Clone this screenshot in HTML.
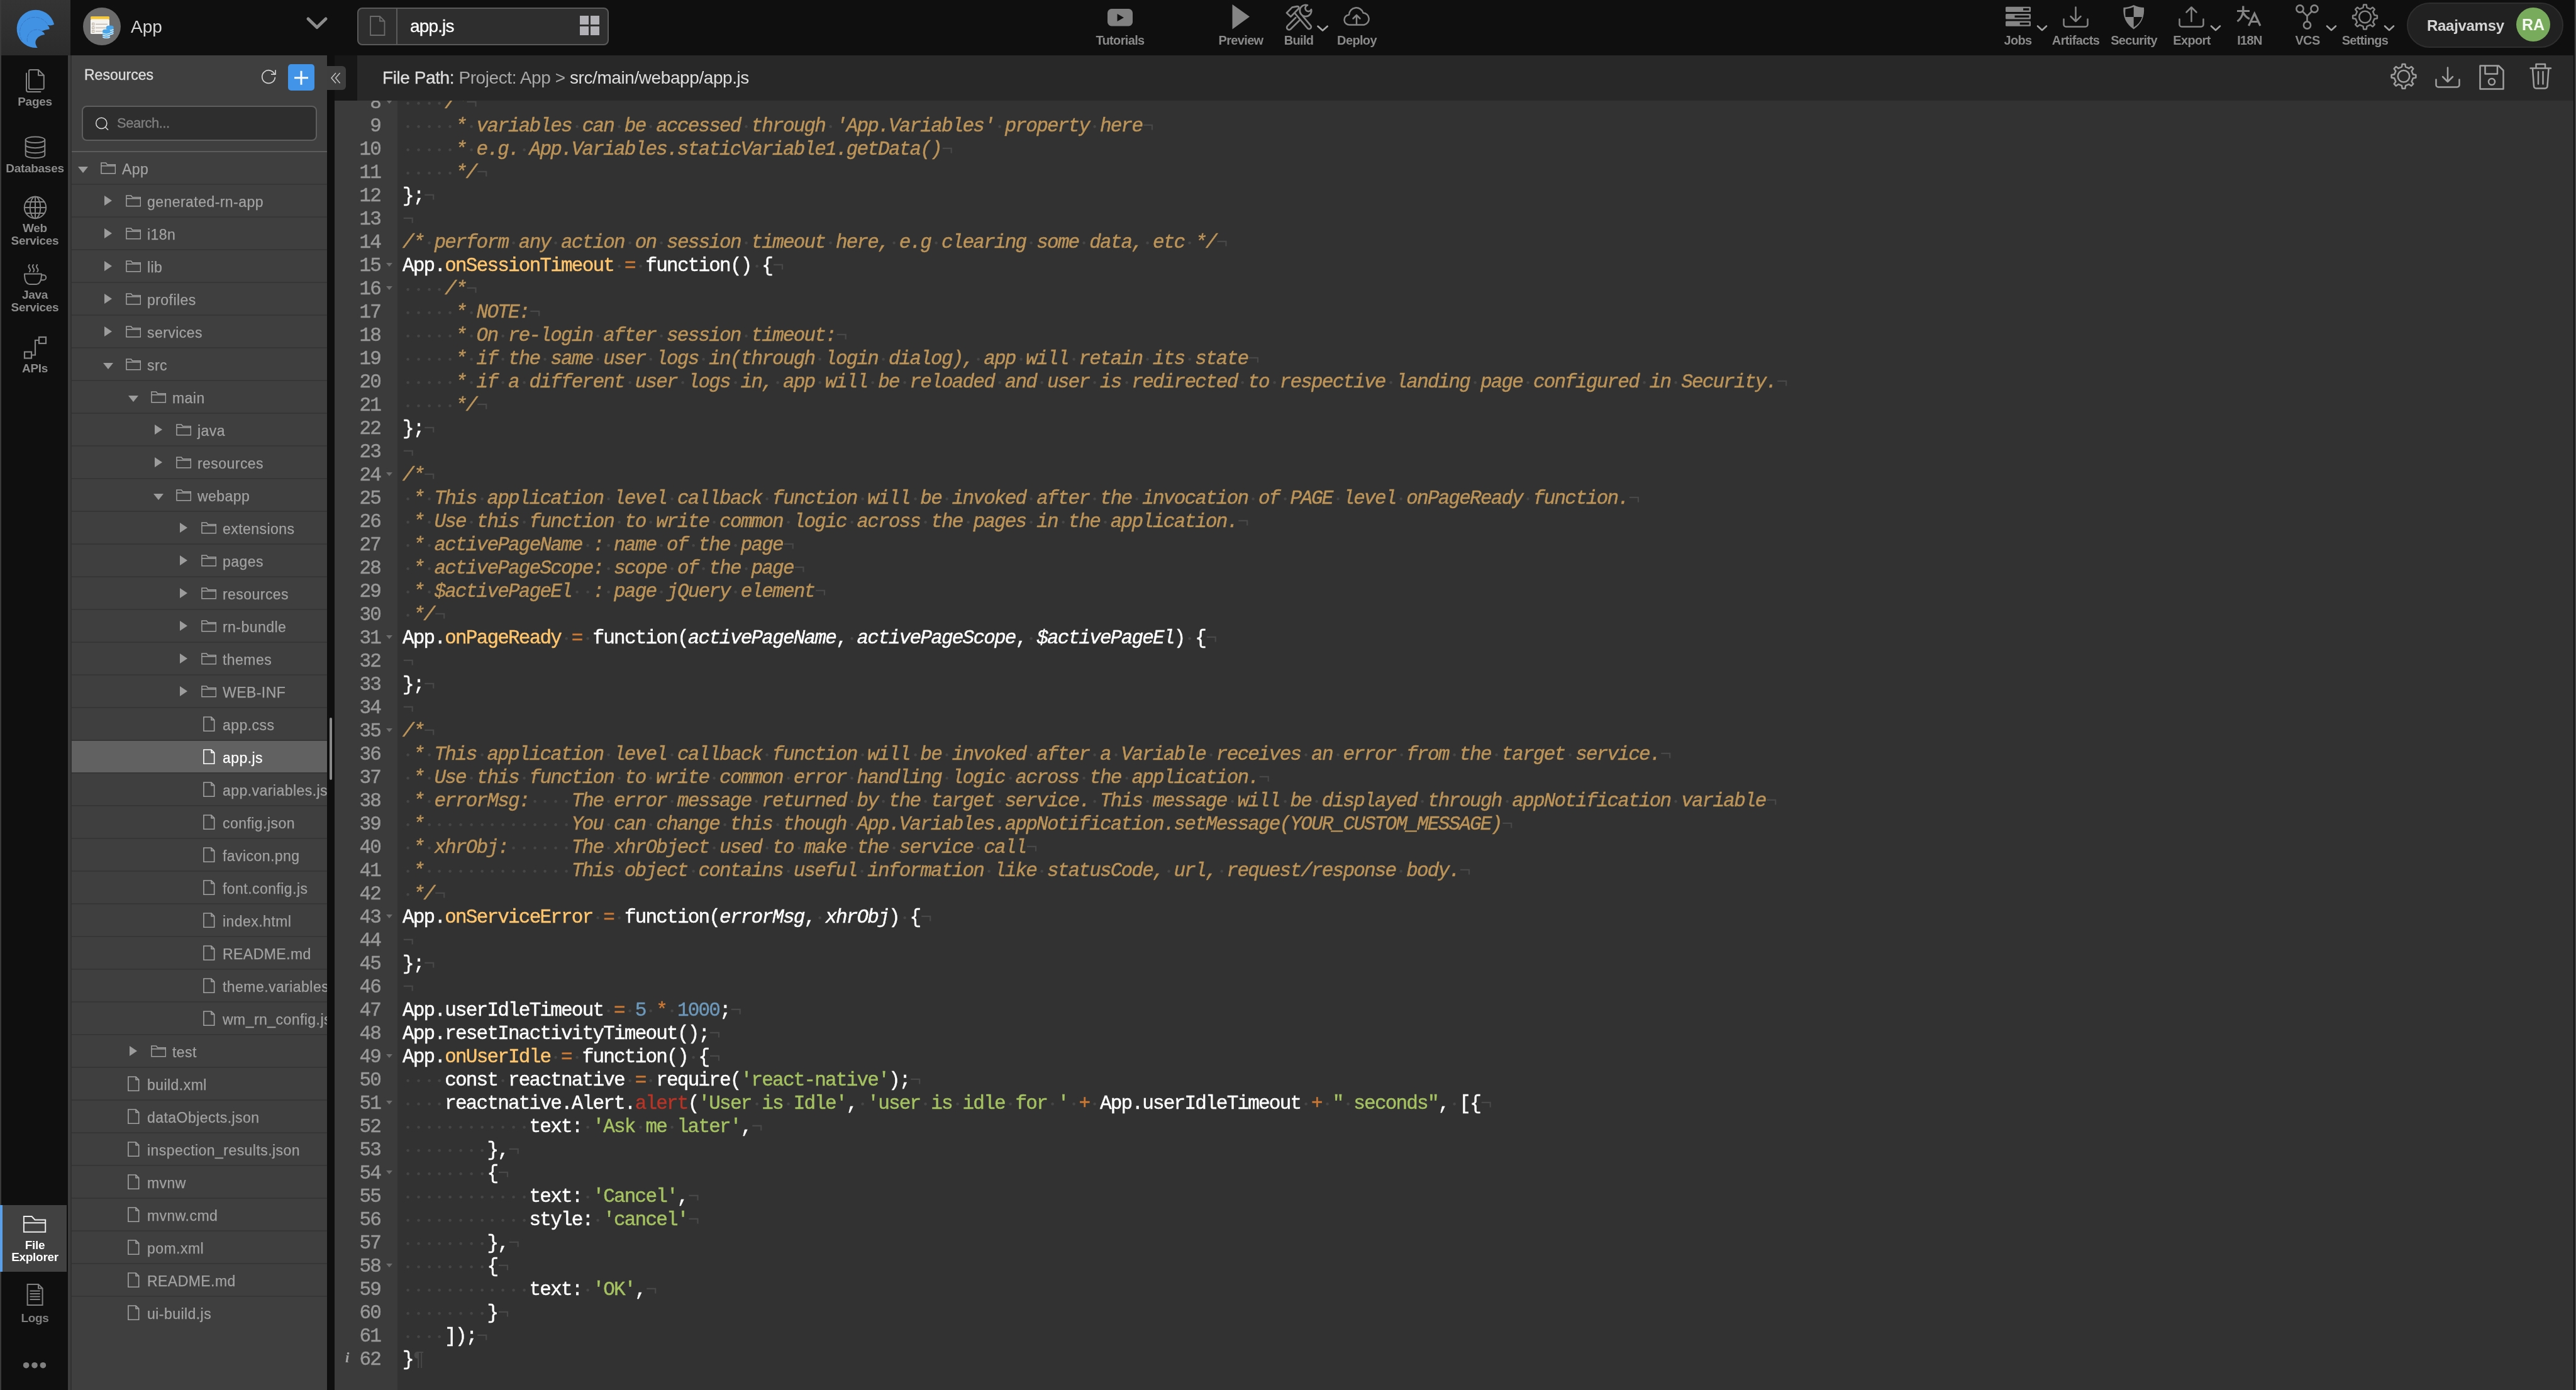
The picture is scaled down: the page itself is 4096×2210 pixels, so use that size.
<!DOCTYPE html>
<html><head><meta charset="utf-8"><title>app.js</title>
<style>
*{box-sizing:border-box;margin:0;padding:0}
html,body{width:4096px;height:2210px;overflow:hidden;background:#0f0f0f}
body{font-family:"Liberation Sans",sans-serif;position:relative;color:#a0a0a0}
.abs{position:absolute}
b,i{font-weight:normal;font-style:normal}
/* window edges */
#edgeL{left:0;top:0;width:2px;height:2210px;background:#3a3a3a}
#edgeR{left:4094px;top:0;width:2px;height:2210px;background:#484848}
/* top bar */
#top{left:0;top:0;width:4096px;height:88px;background:#0f0f0f}
#logo{left:2px;top:0;width:110px;height:88px;background:linear-gradient(#343434,#2b2b2b)}
#projc{left:132px;top:12px;width:60px;height:60px;border-radius:50%;background:#6b6b6b}
#projn{left:208px;top:25px;font-size:28px;line-height:36px;color:#d6d6d6}
#tab{left:568px;top:12px;width:400px;height:60px;border:2px solid #5a5a5a;border-radius:8px;background:#2e2e2e}
#tabdiv{left:630px;top:13px;width:2px;height:58px;background:#5a5a5a}
#tabn{left:652px;top:25px;font-size:28px;line-height:34px;color:#fff;letter-spacing:-0.85px;-webkit-text-stroke:0.3px}
.tl{position:absolute;top:52px;font-size:20px;line-height:24px;font-weight:bold;color:#8a8a8a;text-align:center;white-space:nowrap;transform:translateX(-50%);letter-spacing:-0.65px}
.ti{position:absolute;color:#858585}
.chev{position:absolute;color:#9a9a9a}
#pill{left:3827px;top:4px;width:249px;height:72px;border-radius:36px;background:#212121;border:2px solid #2e2e2e}
#uname{left:3859px;top:26px;font-size:24px;line-height:30px;font-weight:bold;color:#d4d4d4;letter-spacing:-0.3px}
#avatar{left:4001px;top:12px;width:54px;height:54px;border-radius:50%;background:#79ab5c;color:#f4f8f0;font-weight:bold;font-size:25px;line-height:54px;text-align:center}
/* left nav */
#nav{left:2px;top:88px;width:106px;height:2122px;background:#0f0f0f}
#navstrip{left:108px;top:88px;width:6px;height:2122px;background:#3c3c3c;border-right:2px solid #313131}
.nl{z-index:6;position:absolute;left:3px;width:105px;text-align:center;font-size:19px;line-height:32px;font-weight:bold;color:#8c8c8c;letter-spacing:-0.3px}
.ni{position:absolute;color:#8c8c8c}
#navact{left:0;top:1916px;width:106px;height:106px;background:#414141;border-left:4px solid #5b9fe9;z-index:5}
/* resources panel */
#panel{left:114px;top:88px;width:406px;height:2122px;background:#3f3f3f;overflow:hidden}
#rtitle{left:20px;top:16px;font-size:23px;line-height:30px;color:#dcdcdc;-webkit-text-stroke:0.4px}
#plus{left:344px;top:14px;width:42px;height:42px;border-radius:5px;background:#4294e9}
#search{left:16px;top:80px;width:374px;height:56px;border:2px solid #5e5e5e;border-radius:8px;background:#2e2e2e}
#searcht{left:72px;top:94px;font-size:22px;line-height:28px;color:#808080;letter-spacing:-0.5px;-webkit-text-stroke:0.3px}
#pdiv{left:0;top:152px;width:406px;height:2px;background:#5c5c5c}
#tree{left:0;top:154px;width:406px}
.tr{position:relative;height:52px;border-bottom:2px solid #363636;color:#a2a2a2;white-space:nowrap}
.tr.last{border-bottom:none}
.tr.sel{background:#616161;color:#fff}
.tn{position:absolute;top:13px;font-size:23px;line-height:28px;letter-spacing:0.45px;-webkit-text-stroke:0.25px}
.fo{position:absolute;top:16px}
.fi{position:absolute;top:13px}
.ad{position:absolute;top:23px;width:0;height:0;border-left:8px solid transparent;border-right:8px solid transparent;border-top:10px solid #9c9c9c}
.ar{position:absolute;top:17px;width:0;height:0;border-top:8px solid transparent;border-bottom:8px solid transparent;border-left:12px solid #9c9c9c}
#hgap{left:532px;top:88px;width:36px;height:72px;background:#171717}
#collapse{left:520px;top:105px;width:30px;height:38px;background:#3e3e3e;border-radius:0 6px 6px 0}
#thumb{left:524px;top:1141px;width:4px;height:99px;border-radius:2px;background:#8a8a8a}
/* file path bar */
#fp{left:568px;top:88px;width:3524px;height:72px;background:#282828}
#fpt{left:40px;top:17px;font-size:28px;line-height:38px;white-space:nowrap;color:#a8a8a8;letter-spacing:-0.42px}
#fpt b{color:#dedede;font-weight:normal}#fpt b.m{-webkit-text-stroke:0.35px}
/* editor */
#ed{left:532px;top:160px;width:3560px;height:2050px;background:#323232;overflow:hidden}
#gut{left:0;top:0;width:100px;height:2050px;background:#3b3b3b}
#gutin{left:0;top:-15px;width:100px}
.gn{position:relative;height:37px;line-height:37px;font-family:"Liberation Mono",monospace;font-size:31px;letter-spacing:-1.8px;color:#999;text-align:right;padding-right:27px;-webkit-text-stroke:0.45px #999}
.fa{position:absolute;right:7.8px;top:14px;width:0;height:0;border-left:5.2px solid transparent;border-right:5.2px solid transparent;border-top:6.5px solid #6e6e6e}
.inf{position:absolute;left:17px;top:-3px;font-family:"Liberation Serif",serif;font-style:italic;font-weight:bold;font-size:23px;color:#a4a4a4;letter-spacing:0;-webkit-text-stroke:0}
#code{left:108px;top:-15px;width:3500px}
.ln{height:37px;line-height:37px;font-family:"Liberation Mono",monospace;font-size:31px;letter-spacing:-1.8px;white-space:pre;color:#fff;-webkit-text-stroke:0.45px}
.c{color:#bc9458;font-style:italic}
.w{color:#fff}.f{color:#ffc66d}.o{color:#cc7833}.s{color:#a5c261}.n{color:#6c99bb}.a{color:#b83426}.p{color:#fff;font-style:italic}
.d{display:inline-block;width:16.8px;height:37px;vertical-align:top;letter-spacing:0;background:radial-gradient(circle at 8.6px 19.2px,#464646 1.7px,rgba(70,70,70,0) 2.7px)}
.e{color:#484848;font-style:normal;-webkit-text-stroke:0}
#root{position:absolute;left:0;top:0;width:4096px;height:2210px;will-change:transform}
</style></head><body><div id="root">
<div class="abs" id="top"></div>
<div class="abs" id="logo"></div>
<div class="abs" id="projc"></div>
<svg class="abs" style="left:0;top:0" width="300" height="88" viewBox="0 0 300 88"><path d="M59.7 75.9 A30.2 30.2 0 1 1 86.2 38.8 Q81 41.8 75.3 39.6 Q78.6 42.5 78.7 46.3 Q72.5 47.2 66 49.6 Q70.3 51.5 71.2 54.9 Q65.5 55.3 60.9 58.9 Q52.5 66.5 59.7 75.9Z" fill="#4292e4"/><path d="M35 64 A23.7 23.7 0 0 1 75.8 38.8" fill="none" stroke="#3579c4" stroke-width="1" stroke-dasharray="6 1.5"/><path d="M43.6 66.4 A15.5 15.5 0 0 1 66.6 49.3" fill="none" stroke="#3579c4" stroke-width="1" stroke-dasharray="6 1.5"/><rect x="144" y="26" width="30" height="5" rx="1.5" fill="#f4c83c"/><rect x="144" y="30.5" width="30" height="23.5" rx="1.5" fill="#f5f3ef"/><rect x="146.6" y="36.7" width="3.2" height="3.2" fill="none" stroke="#a59a8c" stroke-width="0.8"/><rect x="152" y="37.9" width="19" height="0.9" fill="#a59a8c"/><rect x="146.6" y="42.6" width="3.2" height="3.2" fill="none" stroke="#a59a8c" stroke-width="0.8"/><rect x="152" y="43.8" width="19" height="0.9" fill="#a59a8c"/><rect x="146.6" y="48.1" width="3.2" height="3.2" fill="none" stroke="#a59a8c" stroke-width="0.8"/><rect x="152" y="49.3" width="19" height="0.9" fill="#a59a8c"/><rect x="169.0" y="40.8" width="11.5" height="14.5" rx="3.2" fill="#4aa6ea"/><ellipse cx="174.8" cy="43.1" rx="5.8" ry="2.3" fill="#4aa6ea"/><path d="M169.0 46.9 q5.8 3.0 11.5 0" fill="none" stroke="#eaf4fc" stroke-width="1.2"/><path d="M169.0 50.1 q5.8 3.0 11.5 0" fill="none" stroke="#eaf4fc" stroke-width="1.2"/><path d="M169.0 53.3 q5.8 3.0 11.5 0" fill="none" stroke="#eaf4fc" stroke-width="1.2"/><rect x="163.2" y="46.8" width="11.8" height="14.2" rx="3.2" fill="#4aa6ea"/><ellipse cx="169.1" cy="49.1" rx="5.9" ry="2.3" fill="#4aa6ea"/><path d="M163.2 52.8 q5.9 3.0 11.8 0" fill="none" stroke="#eaf4fc" stroke-width="1.2"/><path d="M163.2 55.9 q5.9 3.0 11.8 0" fill="none" stroke="#eaf4fc" stroke-width="1.2"/><path d="M163.2 59.0 q5.9 3.0 11.8 0" fill="none" stroke="#eaf4fc" stroke-width="1.2"/></svg>
<!--PROJICON-->
<div class="abs" id="projn">App</div>
<!--TOPCHEV-->
<div class="abs" id="tab"></div><div class="abs" id="tabdiv"></div>
<div class="abs" id="tabn">app.js</div>
<!--TABICONS-->
<div class="abs" id="pill"></div>
<div class="abs" id="uname">Raajvamsy</div>
<div class="abs" id="avatar">RA</div>

<div class="abs" id="nav"></div>
<div class="abs" id="navstrip"></div>
<div class="abs" id="navact"></div>
<svg class="abs" style="left:0;top:0;z-index:6" width="114" height="2210" viewBox="0 0 114 2210"><g fill="none" stroke="#858585" stroke-width="2" stroke-linejoin="round" stroke-linecap="round"><path d="M48 111 H61 L69.8 119.8 V140 a1.8 1.8 0 0 1 -1.8 1.8 H47.8 a1.8 1.8 0 0 1 -1.8 -1.8 V113 a2 2 0 0 1 2 -2z M61 111 V119.8 H69.8"/><path d="M42 116.5 V143 a3 3 0 0 0 3 3 H64.5"/><ellipse cx="56" cy="222.3" rx="15.3" ry="4.8"/><path d="M40.7 222.3 V246.5 a15.3 4.8 0 0 0 30.6 0 V222.3"/><path d="M40.7 230.4 a15.3 4.8 0 0 0 30.6 0 M40.7 238.5 a15.3 4.8 0 0 0 30.6 0"/><circle cx="56" cy="330" r="17.2"/><ellipse cx="56" cy="330" rx="8.3" ry="17.2"/><path d="M56 312.8 V347.2 M38.8 330 H73.2 M41.5 321 H70.5 M41.5 339 H70.5"/><path d="M39 435.5 H66 Q66 451.5 57.5 452 H47.5 Q39 451.5 39 435.5z"/><path d="M66 437.3 h3.2 a4 4 0 0 1 0 8 h-4.4"/><path d="M46.8 421 q-2.6 3 0 5.5 q2.6 2.8 0 5.6 M53 421 q-2.6 3 0 5.5 q2.6 2.8 0 5.6 M59.2 421 q-2.6 3 0 5.5 q2.6 2.8 0 5.6"/></g><g fill="none" stroke="#858585" stroke-width="2.2"><rect x="62" y="536" width="11" height="10"/><rect x="39" y="559.5" width="11" height="10"/><path d="M50 564.5 H56 V541 H62"/></g><path d="M37.9 1958.8 V1934 H50.5 L55.5 1939.5 H72.2 V1958.8z M37.9 1944.2 H72.2" fill="none" stroke="#ececec" stroke-width="2"/><g fill="none" stroke="#808080" stroke-width="2"><path d="M43.6 2041.9 H61 L67.6 2048.5 V2075 H43.6z M61 2041.9 V2048.5 H67.6"/><path d="M47.5 2052.5 H63.7 M47.5 2057 H63.7 M47.5 2061.5 H63.7 M47.5 2066 H63.7"/></g><circle cx="41.6" cy="2170.7" r="4.8" fill="#808080"/><circle cx="55.0" cy="2170.7" r="4.8" fill="#808080"/><circle cx="68.4" cy="2170.7" r="4.8" fill="#808080"/></svg><div class="nl" style="top:145.5px;">Pages</div><div class="nl" style="top:251.5px;">Databases</div><div class="nl" style="top:347.0px;">Web</div><div class="nl" style="top:367.0px;">Services</div><div class="nl" style="top:453.0px;">Java</div><div class="nl" style="top:473.0px;">Services</div><div class="nl" style="top:569.5px;">APIs</div><div class="nl" style="top:1963.5px;color:#fff">File</div><div class="nl" style="top:1983.0px;color:#fff">Explorer</div><div class="nl" style="top:2079.5px;color:#808080">Logs</div>

<div class="abs" id="panel">
 <div class="abs" id="rtitle">Resources</div>
 <div class="abs" id="plus"></div>
 <!--PLUSICON-->
 <div class="abs" id="search"></div>
 <!--SEARCHICON-->
 <div class="abs" id="searcht">Search...</div>
 <svg class="abs" style="left:0;top:0" width="406" height="160" viewBox="0 0 406 160"><path d="M322.7 30.4 A10.3 10.3 0 1 0 323.3 35.3" fill="none" stroke="#d2d2d2" stroke-width="1.7" stroke-linecap="round"/><path d="M324 23.2 V30.2 H317" fill="none" stroke="#d2d2d2" stroke-width="1.7" stroke-linecap="butt" stroke-linejoin="miter"/><path d="M354 35.8 H376 M365 24.8 V46.8" stroke="#fafafa" stroke-width="3" fill="none"/><circle cx="47.3" cy="107.9" r="8.6" fill="none" stroke="#dcdcdc" stroke-width="1.5"/><path d="M53.4 114 L57.6 118.2" stroke="#dcdcdc" stroke-width="1.5" stroke-linecap="round"/></svg>
 <div class="abs" id="pdiv"></div>
 <div class="abs" id="tree">
<div class="tr"><b class="ad" style="left:10px"></b><svg class="fo" style="left:46px" width="24.4" height="18.8" viewBox="0 0 26 20"><path d="M1 19V1h8l2.2 3H25v15z M1 6.2h24" fill="none" stroke="currentColor" stroke-width="1.6"/></svg><span class="tn" style="left:80px">App</span></div>
<div class="tr"><b class="ar" style="left:52px"></b><svg class="fo" style="left:86px" width="24.4" height="18.8" viewBox="0 0 26 20"><path d="M1 19V1h8l2.2 3H25v15z M1 6.2h24" fill="none" stroke="currentColor" stroke-width="1.6"/></svg><span class="tn" style="left:120px">generated-rn-app</span></div>
<div class="tr"><b class="ar" style="left:52px"></b><svg class="fo" style="left:86px" width="24.4" height="18.8" viewBox="0 0 26 20"><path d="M1 19V1h8l2.2 3H25v15z M1 6.2h24" fill="none" stroke="currentColor" stroke-width="1.6"/></svg><span class="tn" style="left:120px">i18n</span></div>
<div class="tr"><b class="ar" style="left:52px"></b><svg class="fo" style="left:86px" width="24.4" height="18.8" viewBox="0 0 26 20"><path d="M1 19V1h8l2.2 3H25v15z M1 6.2h24" fill="none" stroke="currentColor" stroke-width="1.6"/></svg><span class="tn" style="left:120px">lib</span></div>
<div class="tr"><b class="ar" style="left:52px"></b><svg class="fo" style="left:86px" width="24.4" height="18.8" viewBox="0 0 26 20"><path d="M1 19V1h8l2.2 3H25v15z M1 6.2h24" fill="none" stroke="currentColor" stroke-width="1.6"/></svg><span class="tn" style="left:120px">profiles</span></div>
<div class="tr"><b class="ar" style="left:52px"></b><svg class="fo" style="left:86px" width="24.4" height="18.8" viewBox="0 0 26 20"><path d="M1 19V1h8l2.2 3H25v15z M1 6.2h24" fill="none" stroke="currentColor" stroke-width="1.6"/></svg><span class="tn" style="left:120px">services</span></div>
<div class="tr"><b class="ad" style="left:50px"></b><svg class="fo" style="left:86px" width="24.4" height="18.8" viewBox="0 0 26 20"><path d="M1 19V1h8l2.2 3H25v15z M1 6.2h24" fill="none" stroke="currentColor" stroke-width="1.6"/></svg><span class="tn" style="left:120px">src</span></div>
<div class="tr"><b class="ad" style="left:90px"></b><svg class="fo" style="left:126px" width="24.4" height="18.8" viewBox="0 0 26 20"><path d="M1 19V1h8l2.2 3H25v15z M1 6.2h24" fill="none" stroke="currentColor" stroke-width="1.6"/></svg><span class="tn" style="left:160px">main</span></div>
<div class="tr"><b class="ar" style="left:132px"></b><svg class="fo" style="left:166px" width="24.4" height="18.8" viewBox="0 0 26 20"><path d="M1 19V1h8l2.2 3H25v15z M1 6.2h24" fill="none" stroke="currentColor" stroke-width="1.6"/></svg><span class="tn" style="left:200px">java</span></div>
<div class="tr"><b class="ar" style="left:132px"></b><svg class="fo" style="left:166px" width="24.4" height="18.8" viewBox="0 0 26 20"><path d="M1 19V1h8l2.2 3H25v15z M1 6.2h24" fill="none" stroke="currentColor" stroke-width="1.6"/></svg><span class="tn" style="left:200px">resources</span></div>
<div class="tr"><b class="ad" style="left:130px"></b><svg class="fo" style="left:166px" width="24.4" height="18.8" viewBox="0 0 26 20"><path d="M1 19V1h8l2.2 3H25v15z M1 6.2h24" fill="none" stroke="currentColor" stroke-width="1.6"/></svg><span class="tn" style="left:200px">webapp</span></div>
<div class="tr"><b class="ar" style="left:172px"></b><svg class="fo" style="left:206px" width="24.4" height="18.8" viewBox="0 0 26 20"><path d="M1 19V1h8l2.2 3H25v15z M1 6.2h24" fill="none" stroke="currentColor" stroke-width="1.6"/></svg><span class="tn" style="left:240px">extensions</span></div>
<div class="tr"><b class="ar" style="left:172px"></b><svg class="fo" style="left:206px" width="24.4" height="18.8" viewBox="0 0 26 20"><path d="M1 19V1h8l2.2 3H25v15z M1 6.2h24" fill="none" stroke="currentColor" stroke-width="1.6"/></svg><span class="tn" style="left:240px">pages</span></div>
<div class="tr"><b class="ar" style="left:172px"></b><svg class="fo" style="left:206px" width="24.4" height="18.8" viewBox="0 0 26 20"><path d="M1 19V1h8l2.2 3H25v15z M1 6.2h24" fill="none" stroke="currentColor" stroke-width="1.6"/></svg><span class="tn" style="left:240px">resources</span></div>
<div class="tr"><b class="ar" style="left:172px"></b><svg class="fo" style="left:206px" width="24.4" height="18.8" viewBox="0 0 26 20"><path d="M1 19V1h8l2.2 3H25v15z M1 6.2h24" fill="none" stroke="currentColor" stroke-width="1.6"/></svg><span class="tn" style="left:240px">rn-bundle</span></div>
<div class="tr"><b class="ar" style="left:172px"></b><svg class="fo" style="left:206px" width="24.4" height="18.8" viewBox="0 0 26 20"><path d="M1 19V1h8l2.2 3H25v15z M1 6.2h24" fill="none" stroke="currentColor" stroke-width="1.6"/></svg><span class="tn" style="left:240px">themes</span></div>
<div class="tr"><b class="ar" style="left:172px"></b><svg class="fo" style="left:206px" width="24.4" height="18.8" viewBox="0 0 26 20"><path d="M1 19V1h8l2.2 3H25v15z M1 6.2h24" fill="none" stroke="currentColor" stroke-width="1.6"/></svg><span class="tn" style="left:240px">WEB-INF</span></div>
<div class="tr"><svg class="fi" style="left:209px" width="18.6" height="24.2" viewBox="0 0 20 26"><path d="M1 1h13L19 6V25H1z M14 1v5H19" fill="none" stroke="currentColor" stroke-width="1.7"/></svg><span class="tn" style="left:240px">app.css</span></div>
<div class="tr sel"><svg class="fi" style="left:209px" width="18.6" height="24.2" viewBox="0 0 20 26"><path d="M1 1h13L19 6V25H1z M14 1v5H19" fill="none" stroke="currentColor" stroke-width="1.7"/></svg><span class="tn" style="left:240px">app.js</span></div>
<div class="tr"><svg class="fi" style="left:209px" width="18.6" height="24.2" viewBox="0 0 20 26"><path d="M1 1h13L19 6V25H1z M14 1v5H19" fill="none" stroke="currentColor" stroke-width="1.7"/></svg><span class="tn" style="left:240px">app.variables.js</span></div>
<div class="tr"><svg class="fi" style="left:209px" width="18.6" height="24.2" viewBox="0 0 20 26"><path d="M1 1h13L19 6V25H1z M14 1v5H19" fill="none" stroke="currentColor" stroke-width="1.7"/></svg><span class="tn" style="left:240px">config.json</span></div>
<div class="tr"><svg class="fi" style="left:209px" width="18.6" height="24.2" viewBox="0 0 20 26"><path d="M1 1h13L19 6V25H1z M14 1v5H19" fill="none" stroke="currentColor" stroke-width="1.7"/></svg><span class="tn" style="left:240px">favicon.png</span></div>
<div class="tr"><svg class="fi" style="left:209px" width="18.6" height="24.2" viewBox="0 0 20 26"><path d="M1 1h13L19 6V25H1z M14 1v5H19" fill="none" stroke="currentColor" stroke-width="1.7"/></svg><span class="tn" style="left:240px">font.config.js</span></div>
<div class="tr"><svg class="fi" style="left:209px" width="18.6" height="24.2" viewBox="0 0 20 26"><path d="M1 1h13L19 6V25H1z M14 1v5H19" fill="none" stroke="currentColor" stroke-width="1.7"/></svg><span class="tn" style="left:240px">index.html</span></div>
<div class="tr"><svg class="fi" style="left:209px" width="18.6" height="24.2" viewBox="0 0 20 26"><path d="M1 1h13L19 6V25H1z M14 1v5H19" fill="none" stroke="currentColor" stroke-width="1.7"/></svg><span class="tn" style="left:240px">README.md</span></div>
<div class="tr"><svg class="fi" style="left:209px" width="18.6" height="24.2" viewBox="0 0 20 26"><path d="M1 1h13L19 6V25H1z M14 1v5H19" fill="none" stroke="currentColor" stroke-width="1.7"/></svg><span class="tn" style="left:240px">theme.variables.js</span></div>
<div class="tr"><svg class="fi" style="left:209px" width="18.6" height="24.2" viewBox="0 0 20 26"><path d="M1 1h13L19 6V25H1z M14 1v5H19" fill="none" stroke="currentColor" stroke-width="1.7"/></svg><span class="tn" style="left:240px">wm_rn_config.json</span></div>
<div class="tr"><b class="ar" style="left:92px"></b><svg class="fo" style="left:126px" width="24.4" height="18.8" viewBox="0 0 26 20"><path d="M1 19V1h8l2.2 3H25v15z M1 6.2h24" fill="none" stroke="currentColor" stroke-width="1.6"/></svg><span class="tn" style="left:160px">test</span></div>
<div class="tr"><svg class="fi" style="left:89px" width="18.6" height="24.2" viewBox="0 0 20 26"><path d="M1 1h13L19 6V25H1z M14 1v5H19" fill="none" stroke="currentColor" stroke-width="1.7"/></svg><span class="tn" style="left:120px">build.xml</span></div>
<div class="tr"><svg class="fi" style="left:89px" width="18.6" height="24.2" viewBox="0 0 20 26"><path d="M1 1h13L19 6V25H1z M14 1v5H19" fill="none" stroke="currentColor" stroke-width="1.7"/></svg><span class="tn" style="left:120px">dataObjects.json</span></div>
<div class="tr"><svg class="fi" style="left:89px" width="18.6" height="24.2" viewBox="0 0 20 26"><path d="M1 1h13L19 6V25H1z M14 1v5H19" fill="none" stroke="currentColor" stroke-width="1.7"/></svg><span class="tn" style="left:120px">inspection_results.json</span></div>
<div class="tr"><svg class="fi" style="left:89px" width="18.6" height="24.2" viewBox="0 0 20 26"><path d="M1 1h13L19 6V25H1z M14 1v5H19" fill="none" stroke="currentColor" stroke-width="1.7"/></svg><span class="tn" style="left:120px">mvnw</span></div>
<div class="tr"><svg class="fi" style="left:89px" width="18.6" height="24.2" viewBox="0 0 20 26"><path d="M1 1h13L19 6V25H1z M14 1v5H19" fill="none" stroke="currentColor" stroke-width="1.7"/></svg><span class="tn" style="left:120px">mvnw.cmd</span></div>
<div class="tr"><svg class="fi" style="left:89px" width="18.6" height="24.2" viewBox="0 0 20 26"><path d="M1 1h13L19 6V25H1z M14 1v5H19" fill="none" stroke="currentColor" stroke-width="1.7"/></svg><span class="tn" style="left:120px">pom.xml</span></div>
<div class="tr"><svg class="fi" style="left:89px" width="18.6" height="24.2" viewBox="0 0 20 26"><path d="M1 1h13L19 6V25H1z M14 1v5H19" fill="none" stroke="currentColor" stroke-width="1.7"/></svg><span class="tn" style="left:120px">README.md</span></div>
<div class="tr last"><svg class="fi" style="left:89px" width="18.6" height="24.2" viewBox="0 0 20 26"><path d="M1 1h13L19 6V25H1z M14 1v5H19" fill="none" stroke="currentColor" stroke-width="1.7"/></svg><span class="tn" style="left:120px">ui-build.js</span></div>
 </div>
</div>
<div class="abs" id="hgap"></div>
<div class="abs" id="collapse"></div>
<!--COLLAPSEICON-->
<div class="abs" id="thumb"></div>

<div class="abs" id="fp">
 <div class="abs" id="fpt"><b class="m">File Path:</b> Project: App &gt; <b>src/main/webapp/app.js</b></div>
 <!--FPICONS-->
</div>

<div class="abs" id="ed">
 <div class="abs" id="gut"><div class="abs" id="gutin">
<div class="gn">8<b class="fa"></b></div>
<div class="gn">9</div>
<div class="gn">10</div>
<div class="gn">11</div>
<div class="gn">12</div>
<div class="gn">13</div>
<div class="gn">14</div>
<div class="gn">15<b class="fa"></b></div>
<div class="gn">16<b class="fa"></b></div>
<div class="gn">17</div>
<div class="gn">18</div>
<div class="gn">19</div>
<div class="gn">20</div>
<div class="gn">21</div>
<div class="gn">22</div>
<div class="gn">23</div>
<div class="gn">24<b class="fa"></b></div>
<div class="gn">25</div>
<div class="gn">26</div>
<div class="gn">27</div>
<div class="gn">28</div>
<div class="gn">29</div>
<div class="gn">30</div>
<div class="gn">31<b class="fa"></b></div>
<div class="gn">32</div>
<div class="gn">33</div>
<div class="gn">34</div>
<div class="gn">35<b class="fa"></b></div>
<div class="gn">36</div>
<div class="gn">37</div>
<div class="gn">38</div>
<div class="gn">39</div>
<div class="gn">40</div>
<div class="gn">41</div>
<div class="gn">42</div>
<div class="gn">43<b class="fa"></b></div>
<div class="gn">44</div>
<div class="gn">45</div>
<div class="gn">46</div>
<div class="gn">47</div>
<div class="gn">48</div>
<div class="gn">49<b class="fa"></b></div>
<div class="gn">50</div>
<div class="gn">51<b class="fa"></b></div>
<div class="gn">52</div>
<div class="gn">53</div>
<div class="gn">54<b class="fa"></b></div>
<div class="gn">55</div>
<div class="gn">56</div>
<div class="gn">57</div>
<div class="gn">58<b class="fa"></b></div>
<div class="gn">59</div>
<div class="gn">60</div>
<div class="gn">61</div>
<div class="gn">62<b class="inf">i</b></div>
 </div></div>
 <div class="abs" id="code">
<div class="ln"><span class="c"><i class="d"></i><i class="d"></i><i class="d"></i><i class="d"></i>/*</span><i class="e">¬</i></div>
<div class="ln"><span class="c"><i class="d"></i><i class="d"></i><i class="d"></i><i class="d"></i><i class="d"></i>*<i class="d"></i>variables<i class="d"></i>can<i class="d"></i>be<i class="d"></i>accessed<i class="d"></i>through<i class="d"></i>&#x27;App.Variables&#x27;<i class="d"></i>property<i class="d"></i>here</span><i class="e">¬</i></div>
<div class="ln"><span class="c"><i class="d"></i><i class="d"></i><i class="d"></i><i class="d"></i><i class="d"></i>*<i class="d"></i>e.g.<i class="d"></i>App.Variables.staticVariable1.getData()</span><i class="e">¬</i></div>
<div class="ln"><span class="c"><i class="d"></i><i class="d"></i><i class="d"></i><i class="d"></i><i class="d"></i>*/</span><i class="e">¬</i></div>
<div class="ln"><span class="w">};</span><i class="e">¬</i></div>
<div class="ln"><i class="e">¬</i></div>
<div class="ln"><span class="c">/*<i class="d"></i>perform<i class="d"></i>any<i class="d"></i>action<i class="d"></i>on<i class="d"></i>session<i class="d"></i>timeout<i class="d"></i>here,<i class="d"></i>e.g<i class="d"></i>clearing<i class="d"></i>some<i class="d"></i>data,<i class="d"></i>etc<i class="d"></i>*/</span><i class="e">¬</i></div>
<div class="ln"><span class="w">App.</span><span class="f">onSessionTimeout</span><span class="w"><i class="d"></i></span><span class="o">=</span><span class="w"><i class="d"></i>function()<i class="d"></i>{</span><i class="e">¬</i></div>
<div class="ln"><span class="c"><i class="d"></i><i class="d"></i><i class="d"></i><i class="d"></i>/*</span><i class="e">¬</i></div>
<div class="ln"><span class="c"><i class="d"></i><i class="d"></i><i class="d"></i><i class="d"></i><i class="d"></i>*<i class="d"></i>NOTE:</span><i class="e">¬</i></div>
<div class="ln"><span class="c"><i class="d"></i><i class="d"></i><i class="d"></i><i class="d"></i><i class="d"></i>*<i class="d"></i>On<i class="d"></i>re-login<i class="d"></i>after<i class="d"></i>session<i class="d"></i>timeout:</span><i class="e">¬</i></div>
<div class="ln"><span class="c"><i class="d"></i><i class="d"></i><i class="d"></i><i class="d"></i><i class="d"></i>*<i class="d"></i>if<i class="d"></i>the<i class="d"></i>same<i class="d"></i>user<i class="d"></i>logs<i class="d"></i>in(through<i class="d"></i>login<i class="d"></i>dialog),<i class="d"></i>app<i class="d"></i>will<i class="d"></i>retain<i class="d"></i>its<i class="d"></i>state</span><i class="e">¬</i></div>
<div class="ln"><span class="c"><i class="d"></i><i class="d"></i><i class="d"></i><i class="d"></i><i class="d"></i>*<i class="d"></i>if<i class="d"></i>a<i class="d"></i>different<i class="d"></i>user<i class="d"></i>logs<i class="d"></i>in,<i class="d"></i>app<i class="d"></i>will<i class="d"></i>be<i class="d"></i>reloaded<i class="d"></i>and<i class="d"></i>user<i class="d"></i>is<i class="d"></i>redirected<i class="d"></i>to<i class="d"></i>respective<i class="d"></i>landing<i class="d"></i>page<i class="d"></i>configured<i class="d"></i>in<i class="d"></i>Security.</span><i class="e">¬</i></div>
<div class="ln"><span class="c"><i class="d"></i><i class="d"></i><i class="d"></i><i class="d"></i><i class="d"></i>*/</span><i class="e">¬</i></div>
<div class="ln"><span class="w">};</span><i class="e">¬</i></div>
<div class="ln"><i class="e">¬</i></div>
<div class="ln"><span class="c">/*</span><i class="e">¬</i></div>
<div class="ln"><span class="c"><i class="d"></i>*<i class="d"></i>This<i class="d"></i>application<i class="d"></i>level<i class="d"></i>callback<i class="d"></i>function<i class="d"></i>will<i class="d"></i>be<i class="d"></i>invoked<i class="d"></i>after<i class="d"></i>the<i class="d"></i>invocation<i class="d"></i>of<i class="d"></i>PAGE<i class="d"></i>level<i class="d"></i>onPageReady<i class="d"></i>function.</span><i class="e">¬</i></div>
<div class="ln"><span class="c"><i class="d"></i>*<i class="d"></i>Use<i class="d"></i>this<i class="d"></i>function<i class="d"></i>to<i class="d"></i>write<i class="d"></i>common<i class="d"></i>logic<i class="d"></i>across<i class="d"></i>the<i class="d"></i>pages<i class="d"></i>in<i class="d"></i>the<i class="d"></i>application.</span><i class="e">¬</i></div>
<div class="ln"><span class="c"><i class="d"></i>*<i class="d"></i>activePageName<i class="d"></i>:<i class="d"></i>name<i class="d"></i>of<i class="d"></i>the<i class="d"></i>page</span><i class="e">¬</i></div>
<div class="ln"><span class="c"><i class="d"></i>*<i class="d"></i>activePageScope:<i class="d"></i>scope<i class="d"></i>of<i class="d"></i>the<i class="d"></i>page</span><i class="e">¬</i></div>
<div class="ln"><span class="c"><i class="d"></i>*<i class="d"></i>$activePageEl<i class="d"></i><i class="d"></i>:<i class="d"></i>page<i class="d"></i>jQuery<i class="d"></i>element</span><i class="e">¬</i></div>
<div class="ln"><span class="c"><i class="d"></i>*/</span><i class="e">¬</i></div>
<div class="ln"><span class="w">App.</span><span class="f">onPageReady</span><span class="w"><i class="d"></i></span><span class="o">=</span><span class="w"><i class="d"></i>function(</span><span class="p">activePageName</span><span class="w">,<i class="d"></i></span><span class="p">activePageScope</span><span class="w">,<i class="d"></i></span><span class="p">$activePageEl</span><span class="w">)<i class="d"></i>{</span><i class="e">¬</i></div>
<div class="ln"><i class="e">¬</i></div>
<div class="ln"><span class="w">};</span><i class="e">¬</i></div>
<div class="ln"><i class="e">¬</i></div>
<div class="ln"><span class="c">/*</span><i class="e">¬</i></div>
<div class="ln"><span class="c"><i class="d"></i>*<i class="d"></i>This<i class="d"></i>application<i class="d"></i>level<i class="d"></i>callback<i class="d"></i>function<i class="d"></i>will<i class="d"></i>be<i class="d"></i>invoked<i class="d"></i>after<i class="d"></i>a<i class="d"></i>Variable<i class="d"></i>receives<i class="d"></i>an<i class="d"></i>error<i class="d"></i>from<i class="d"></i>the<i class="d"></i>target<i class="d"></i>service.</span><i class="e">¬</i></div>
<div class="ln"><span class="c"><i class="d"></i>*<i class="d"></i>Use<i class="d"></i>this<i class="d"></i>function<i class="d"></i>to<i class="d"></i>write<i class="d"></i>common<i class="d"></i>error<i class="d"></i>handling<i class="d"></i>logic<i class="d"></i>across<i class="d"></i>the<i class="d"></i>application.</span><i class="e">¬</i></div>
<div class="ln"><span class="c"><i class="d"></i>*<i class="d"></i>errorMsg:<i class="d"></i><i class="d"></i><i class="d"></i><i class="d"></i>The<i class="d"></i>error<i class="d"></i>message<i class="d"></i>returned<i class="d"></i>by<i class="d"></i>the<i class="d"></i>target<i class="d"></i>service.<i class="d"></i>This<i class="d"></i>message<i class="d"></i>will<i class="d"></i>be<i class="d"></i>displayed<i class="d"></i>through<i class="d"></i>appNotification<i class="d"></i>variable</span><i class="e">¬</i></div>
<div class="ln"><span class="c"><i class="d"></i>*<i class="d"></i><i class="d"></i><i class="d"></i><i class="d"></i><i class="d"></i><i class="d"></i><i class="d"></i><i class="d"></i><i class="d"></i><i class="d"></i><i class="d"></i><i class="d"></i><i class="d"></i><i class="d"></i>You<i class="d"></i>can<i class="d"></i>change<i class="d"></i>this<i class="d"></i>though<i class="d"></i>App.Variables.appNotification.setMessage(YOUR_CUSTOM_MESSAGE)</span><i class="e">¬</i></div>
<div class="ln"><span class="c"><i class="d"></i>*<i class="d"></i>xhrObj:<i class="d"></i><i class="d"></i><i class="d"></i><i class="d"></i><i class="d"></i><i class="d"></i>The<i class="d"></i>xhrObject<i class="d"></i>used<i class="d"></i>to<i class="d"></i>make<i class="d"></i>the<i class="d"></i>service<i class="d"></i>call</span><i class="e">¬</i></div>
<div class="ln"><span class="c"><i class="d"></i>*<i class="d"></i><i class="d"></i><i class="d"></i><i class="d"></i><i class="d"></i><i class="d"></i><i class="d"></i><i class="d"></i><i class="d"></i><i class="d"></i><i class="d"></i><i class="d"></i><i class="d"></i><i class="d"></i>This<i class="d"></i>object<i class="d"></i>contains<i class="d"></i>useful<i class="d"></i>information<i class="d"></i>like<i class="d"></i>statusCode,<i class="d"></i>url,<i class="d"></i>request/response<i class="d"></i>body.</span><i class="e">¬</i></div>
<div class="ln"><span class="c"><i class="d"></i>*/</span><i class="e">¬</i></div>
<div class="ln"><span class="w">App.</span><span class="f">onServiceError</span><span class="w"><i class="d"></i></span><span class="o">=</span><span class="w"><i class="d"></i>function(</span><span class="p">errorMsg</span><span class="w">,<i class="d"></i></span><span class="p">xhrObj</span><span class="w">)<i class="d"></i>{</span><i class="e">¬</i></div>
<div class="ln"><i class="e">¬</i></div>
<div class="ln"><span class="w">};</span><i class="e">¬</i></div>
<div class="ln"><i class="e">¬</i></div>
<div class="ln"><span class="w">App.userIdleTimeout<i class="d"></i></span><span class="o">=</span><span class="w"><i class="d"></i></span><span class="n">5</span><span class="w"><i class="d"></i></span><span class="o">*</span><span class="w"><i class="d"></i></span><span class="n">1000</span><span class="w">;</span><i class="e">¬</i></div>
<div class="ln"><span class="w">App.resetInactivityTimeout();</span><i class="e">¬</i></div>
<div class="ln"><span class="w">App.</span><span class="f">onUserIdle</span><span class="w"><i class="d"></i></span><span class="o">=</span><span class="w"><i class="d"></i>function()<i class="d"></i>{</span><i class="e">¬</i></div>
<div class="ln"><span class="w"><i class="d"></i><i class="d"></i><i class="d"></i><i class="d"></i>const<i class="d"></i>reactnative<i class="d"></i></span><span class="o">=</span><span class="w"><i class="d"></i>require(</span><span class="s">&#x27;react-native&#x27;</span><span class="w">);</span><i class="e">¬</i></div>
<div class="ln"><span class="w"><i class="d"></i><i class="d"></i><i class="d"></i><i class="d"></i>reactnative.Alert.</span><span class="a">alert</span><span class="w">(</span><span class="s">&#x27;User<i class="d"></i>is<i class="d"></i>Idle&#x27;</span><span class="w">,<i class="d"></i></span><span class="s">&#x27;user<i class="d"></i>is<i class="d"></i>idle<i class="d"></i>for<i class="d"></i>&#x27;</span><span class="w"><i class="d"></i></span><span class="o">+</span><span class="w"><i class="d"></i>App.userIdleTimeout<i class="d"></i></span><span class="o">+</span><span class="w"><i class="d"></i></span><span class="s">&quot;<i class="d"></i>seconds&quot;</span><span class="w">,<i class="d"></i>[{</span><i class="e">¬</i></div>
<div class="ln"><span class="w"><i class="d"></i><i class="d"></i><i class="d"></i><i class="d"></i><i class="d"></i><i class="d"></i><i class="d"></i><i class="d"></i><i class="d"></i><i class="d"></i><i class="d"></i><i class="d"></i>text:<i class="d"></i></span><span class="s">&#x27;Ask<i class="d"></i>me<i class="d"></i>later&#x27;</span><span class="w">,</span><i class="e">¬</i></div>
<div class="ln"><span class="w"><i class="d"></i><i class="d"></i><i class="d"></i><i class="d"></i><i class="d"></i><i class="d"></i><i class="d"></i><i class="d"></i>},</span><i class="e">¬</i></div>
<div class="ln"><span class="w"><i class="d"></i><i class="d"></i><i class="d"></i><i class="d"></i><i class="d"></i><i class="d"></i><i class="d"></i><i class="d"></i>{</span><i class="e">¬</i></div>
<div class="ln"><span class="w"><i class="d"></i><i class="d"></i><i class="d"></i><i class="d"></i><i class="d"></i><i class="d"></i><i class="d"></i><i class="d"></i><i class="d"></i><i class="d"></i><i class="d"></i><i class="d"></i>text:<i class="d"></i></span><span class="s">&#x27;Cancel&#x27;</span><span class="w">,</span><i class="e">¬</i></div>
<div class="ln"><span class="w"><i class="d"></i><i class="d"></i><i class="d"></i><i class="d"></i><i class="d"></i><i class="d"></i><i class="d"></i><i class="d"></i><i class="d"></i><i class="d"></i><i class="d"></i><i class="d"></i>style:<i class="d"></i></span><span class="s">&#x27;cancel&#x27;</span><i class="e">¬</i></div>
<div class="ln"><span class="w"><i class="d"></i><i class="d"></i><i class="d"></i><i class="d"></i><i class="d"></i><i class="d"></i><i class="d"></i><i class="d"></i>},</span><i class="e">¬</i></div>
<div class="ln"><span class="w"><i class="d"></i><i class="d"></i><i class="d"></i><i class="d"></i><i class="d"></i><i class="d"></i><i class="d"></i><i class="d"></i>{</span><i class="e">¬</i></div>
<div class="ln"><span class="w"><i class="d"></i><i class="d"></i><i class="d"></i><i class="d"></i><i class="d"></i><i class="d"></i><i class="d"></i><i class="d"></i><i class="d"></i><i class="d"></i><i class="d"></i><i class="d"></i>text:<i class="d"></i></span><span class="s">&#x27;OK&#x27;</span><span class="w">,</span><i class="e">¬</i></div>
<div class="ln"><span class="w"><i class="d"></i><i class="d"></i><i class="d"></i><i class="d"></i><i class="d"></i><i class="d"></i><i class="d"></i><i class="d"></i>}</span><i class="e">¬</i></div>
<div class="ln"><span class="w"><i class="d"></i><i class="d"></i><i class="d"></i><i class="d"></i>]);</span><i class="e">¬</i></div>
<div class="ln"><span class="w">}</span><i class="e">¶</i></div>
 </div>
</div>
<svg class="abs" style="left:0;top:0" width="4096" height="160" viewBox="0 0 4096 160"><polyline points="490,30 504,43.5 518,30" fill="none" stroke="#8c8c8c" stroke-width="5" stroke-linecap="round" stroke-linejoin="round"/><path d="M589 26h15l7.5 7.5V56h-22.5z M604 26v7.5h7.5" fill="none" stroke="#6a6a6a" stroke-width="1.8"/><rect x="922" y="25" width="14" height="14" fill="#b2b2b6"/><rect x="939" y="25" width="14" height="14" fill="#b2b2b6"/><rect x="922" y="42" width="14" height="14" fill="#b2b2b6"/><rect x="939" y="42" width="14" height="14" fill="#b2b2b6"/><rect x="1761" y="14" width="40" height="27.5" rx="6.5" fill="#808080"/><path d="M1776.5 22v12l10.5-6z" fill="#0f0f0f"/><path d="M1959.5 7v39.5L1987 26.5z" fill="#858585"/><g fill="none" stroke="#858585" stroke-width="2.7" stroke-linejoin="round" stroke-linecap="round"><path d="M2045.9 20.5 L2054.6 11.6 L2062.5 10.1 Q2066 10 2065.2 13.2 L2052.4 26.6z"/><path transform="translate(2049.7 43.7) rotate(-135)" d="M-3.6 19.5 V0 A3.6 3.6 0 0 1 3.6 0 V18.5"/><path transform="translate(2081.5 42.7) rotate(140)" d="M-3.35 19.3 V0 A3.35 3.35 0 0 1 3.35 0 V30.7"/><path d="M2079 8.3 A9.2 9.2 0 1 0 2085 15 A5 5 0 1 1 2079 8.3z"/></g><g fill="none" stroke="#858585" stroke-width="2.5" stroke-linejoin="round" stroke-linecap="round"><path d="M2146 39.5 a8 8 0 0 1 -1 -16 a11.5 11.5 0 0 1 22.5 -3 a9.6 9.6 0 0 1 1.5 19 z"/><path d="M2157 39 V24 M2151.5 29.5 L2157 24 L2162.5 29.5"/></g><rect x="3189" y="10.7" width="40" height="8.3" rx="1.5" fill="#858585"/><rect x="3217.0" y="13.2" width="9.5" height="3.3" fill="#0f0f0f"/><rect x="3189" y="22.1" width="40" height="8.3" rx="1.5" fill="#858585"/><rect x="3203.5" y="24.6" width="23.0" height="3.3" fill="#0f0f0f"/><rect x="3189" y="33.5" width="40" height="8.3" rx="1.5" fill="#858585"/><rect x="3211.7" y="36.0" width="14.8" height="3.3" fill="#0f0f0f"/><g fill="none" stroke="#858585" stroke-width="2.5" stroke-linejoin="round" stroke-linecap="round"><path d="M3281.5 30.5 V39 a3.5 3.5 0 0 0 3.5 3.5 H3316 a3.5 3.5 0 0 0 3.5 -3.5 V30.5"/><path d="M3300.5 11.5 V34 M3292.5 26 L3300.5 34 L3308.5 26"/><path d="M3465.5 30.5 V39 a3.5 3.5 0 0 0 3.5 3.5 H3500 a3.5 3.5 0 0 0 3.5 -3.5 V30.5"/><path d="M3484.5 34 V11.5 M3476.5 19.5 L3484.5 11.5 L3492.5 19.5"/></g><path d="M3376.5 12 Q3385 12 3392.7 8 Q3400.5 12 3409 12 Q3411 34 3392.7 46.5 Q3374.5 34 3376.5 12z" fill="#858585"/><path d="M3379.5 14.5 Q3386 14 3392.7 11 V27 H3379.6 Q3379 21 3379.5 14.5z" fill="#0f0f0f"/><path d="M3392.7 27 H3406 Q3404 36 3392.7 43.5z" fill="#0f0f0f"/><g fill="none" stroke="#858585" stroke-width="3.2" stroke-linecap="butt"><path d="M3557 17.5 H3577 M3566.8 9.5 V19 M3566.8 18 Q3565 29 3557.5 34 M3566.8 20 Q3570 27 3577 30"/><path d="M3575.5 41 L3584.8 21.5 L3594 41 M3578.8 34.5 H3590.8"/></g><g fill="none" stroke="#858585" stroke-width="2.6"><circle cx="3657" cy="14" r="5.6"/><circle cx="3680" cy="14" r="5.6"/><circle cx="3668.5" cy="40" r="5.6"/><path d="M3661 18 L3668.5 25.5 L3676 18 M3668.5 25.5 V34.4"/></g><path d="M3757.5 12.1 L3758.2 7.6 L3762.8 7.6 L3763.5 12.1 L3768.9 14.4 L3772.6 11.7 L3775.8 14.9 L3773.1 18.6 L3775.4 24.0 L3779.9 24.7 L3779.9 29.3 L3775.4 30.0 L3773.1 35.4 L3775.8 39.1 L3772.6 42.3 L3768.9 39.6 L3763.5 41.9 L3762.8 46.4 L3758.2 46.4 L3757.5 41.9 L3752.1 39.6 L3748.4 42.3 L3745.2 39.1 L3747.9 35.4 L3745.6 30.0 L3741.1 29.3 L3741.1 24.7 L3745.6 24.0 L3747.9 18.6 L3745.2 14.9 L3748.4 11.7 L3752.1 14.4Z" fill="none" stroke="#858585" stroke-width="2.5" stroke-linejoin="round"/><circle cx="3760.5" cy="27" r="9.3" fill="none" stroke="#858585" stroke-width="2.5"/><polyline points="3240,41.5 3247,48 3254,41.5" fill="none" stroke="#a2a2a2" stroke-width="2.6" stroke-linecap="round" stroke-linejoin="round"/><polyline points="3516,41.5 3523,48 3530,41.5" fill="none" stroke="#a2a2a2" stroke-width="2.6" stroke-linecap="round" stroke-linejoin="round"/><polyline points="3700,41.5 3707,48 3714,41.5" fill="none" stroke="#a2a2a2" stroke-width="2.6" stroke-linecap="round" stroke-linejoin="round"/><polyline points="3792,41.5 3799,48 3806,41.5" fill="none" stroke="#a2a2a2" stroke-width="2.6" stroke-linecap="round" stroke-linejoin="round"/><polyline points="2095.5,41.8 2103.1,48.6 2110.7,41.8" fill="none" stroke="#a8a8a8" stroke-width="2.7" stroke-linecap="round" stroke-linejoin="round"/><path d="M3819.0 106.4 L3819.7 101.9 L3824.3 101.9 L3825.0 106.4 L3830.4 108.7 L3834.1 106.0 L3837.3 109.2 L3834.6 112.9 L3836.9 118.3 L3841.4 119.0 L3841.4 123.6 L3836.9 124.3 L3834.6 129.7 L3837.3 133.4 L3834.1 136.6 L3830.4 133.9 L3825.0 136.2 L3824.3 140.7 L3819.7 140.7 L3819.0 136.2 L3813.6 133.9 L3809.9 136.6 L3806.7 133.4 L3809.4 129.7 L3807.1 124.3 L3802.6 123.6 L3802.6 119.0 L3807.1 118.3 L3809.4 112.9 L3806.7 109.2 L3809.9 106.0 L3813.6 108.7Z" fill="none" stroke="#a0a0a0" stroke-width="2.5" stroke-linejoin="round"/><circle cx="3822" cy="121.3" r="9.3" fill="none" stroke="#a0a0a0" stroke-width="2.5"/><g fill="none" stroke="#a0a0a0" stroke-width="2.5" stroke-linejoin="round" stroke-linecap="round"><path d="M3873.5 126.5 V135 a3.5 3.5 0 0 0 3.5 3.5 H3907 a3.5 3.5 0 0 0 3.5 -3.5 V126.5"/><path d="M3892 107.5 V130 M3884 122 L3892 130 L3900 122"/><path d="M3943.5 104.5 H3973 L3980.5 112 V141.5 H3943.5z M3951.5 104.5 V117.5 H3971 V104.5"/><circle cx="3962" cy="130" r="5"/><path d="M4023.5 108.5 H4056 M4032.5 108.5 V102 H4047 V108.5 M4027 108.5 L4029 137 a3.5 3.5 0 0 0 3.5 3.5 H4047 a3.5 3.5 0 0 0 3.5 -3.5 L4052.5 108.5 M4036 114 V133.5 M4043.5 114 V133.5"/></g><path d="M534 116 L527 124.1 L534 132.2 M540.6 116 L533.6 124.1 L540.6 132.2" fill="none" stroke="#c4c4c4" stroke-width="1.5"/></svg><div class="tl" style="left:1781.0px">Tutorials</div><div class="tl" style="left:1973.0px">Preview</div><div class="tl" style="left:2065.0px">Build</div><div class="tl" style="left:2157.5px">Deploy</div><div class="tl" style="left:3208.5px">Jobs</div><div class="tl" style="left:3300.5px">Artifacts</div><div class="tl" style="left:3393.0px">Security</div><div class="tl" style="left:3485.0px">Export</div><div class="tl" style="left:3577.0px">I18N</div><div class="tl" style="left:3669.0px">VCS</div><div class="tl" style="left:3760.5px">Settings</div>
<div class="abs" id="edgeL"></div>
<div class="abs" id="edgeR"></div>
</div></body></html>
